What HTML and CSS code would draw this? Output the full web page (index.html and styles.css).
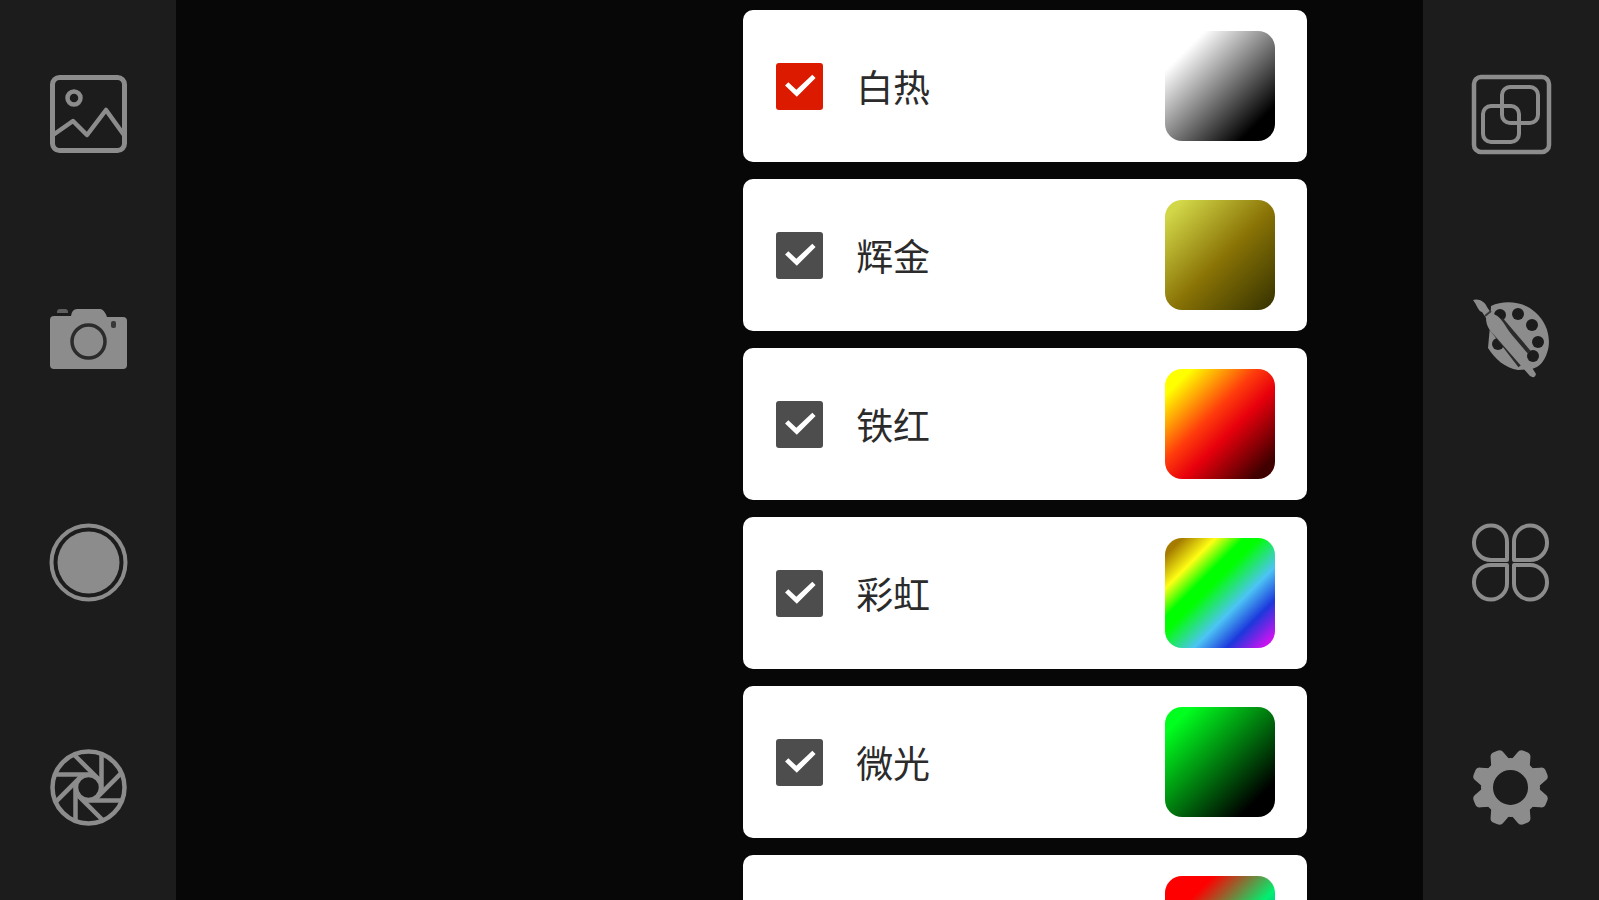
FILE: index.html
```html
<!DOCTYPE html>
<html lang="zh-CN">
  <head>
    <meta charset="UTF-8">
    <title>热成像</title>
    <link rel="stylesheet" href="styles.css">
  </head>
  <body>
    <div class="app">
      <nav class="sidebar">
        <button type="button" class="tool" aria-label="相册">
          <svg class="icon" viewBox="0 0 80 80" fill="none" stroke="currentColor" stroke-width="5" stroke-linejoin="round">
            <rect x="4.500" y="4.500" width="72" height="73" rx="7"/>
            <circle cx="26" cy="25" r="6.500" stroke-width="4.500"/>
            <path d="M5 62 25 48 39 62 58 37 76 62" stroke-width="4.500"/>
          </svg>
        </button>
        <button type="button" class="tool" aria-label="拍照">
          <svg class="icon" viewBox="0 0 80 80" fill="currentColor">
            <path d="M9 14q0-3 3-3h5q3 0 3 3v1H9z" opacity=".6"/>
            <path d="M6 18h17q1-7 6-7h23q4 0 7 8h16q4 0 4 4v44q0 4-4 4H6q-4 0-4-4V22q0-4 4-4z"/>
            <circle cx="40.500" cy="43.500" r="16.500" fill="none" stroke="#2b2b2b" stroke-width="3.500"/>
            <rect x="63" y="23" width="5" height="7" rx="2" fill="#383838"/>
          </svg>
        </button>
        <button type="button" class="tool" aria-label="录像">
          <svg class="icon" viewBox="0 0 80 80">
            <circle cx="40.500" cy="39.500" r="37" fill="none" stroke="currentColor" stroke-width="4"/>
            <circle cx="40.500" cy="39.500" r="31" fill="currentColor"/>
          </svg>
        </button>
        <button type="button" class="tool" aria-label="光圈">
          <svg class="icon" viewBox="0 0 80 80" fill="none" stroke="currentColor" stroke-width="4.500">
            <g transform="translate(40.500 39.500)">
              <circle r="36"/>
              <circle r="12.500"/>
              <path id="blade" d="M13-34V3"/>
              <use href="#blade" transform="rotate(45)"/>
              <use href="#blade" transform="rotate(90)"/>
              <use href="#blade" transform="rotate(135)"/>
              <use href="#blade" transform="rotate(180)"/>
              <use href="#blade" transform="rotate(225)"/>
              <use href="#blade" transform="rotate(270)"/>
              <use href="#blade" transform="rotate(315)"/>
            </g>
          </svg>
        </button>
      </nav>

      <main class="stage">
        <div class="palettes">
          <label class="card">
            <input type="checkbox" class="check active" checked>
            <span class="name">白热</span>
            <span class="swatch white-hot"></span>
          </label>
          <label class="card">
            <input type="checkbox" class="check" checked>
            <span class="name">辉金</span>
            <span class="swatch gold"></span>
          </label>
          <label class="card">
            <input type="checkbox" class="check" checked>
            <span class="name">铁红</span>
            <span class="swatch iron-red"></span>
          </label>
          <label class="card">
            <input type="checkbox" class="check" checked>
            <span class="name">彩虹</span>
            <span class="swatch rainbow"></span>
          </label>
          <label class="card">
            <input type="checkbox" class="check" checked>
            <span class="name">微光</span>
            <span class="swatch low-light"></span>
          </label>
          <label class="card">
            <input type="checkbox" class="check" aria-label="色板" checked>
            <span class="name"></span>
            <span class="swatch red-green"></span>
          </label>
        </div>
      </main>

      <nav class="sidebar">
        <button type="button" class="tool" aria-label="融合">
          <svg class="icon" viewBox="0 0 80 80" fill="none" stroke="currentColor" stroke-width="4.500">
            <rect x="3" y="4" width="75" height="75" rx="7"/>
            <rect x="31" y="14" width="36" height="36" rx="8" stroke-width="4"/>
            <rect x="12" y="33" width="36" height="36" rx="8" stroke-width="4"/>
          </svg>
        </button>
        <button type="button" class="tool" aria-label="调色板">
          <svg class="icon" viewBox="0 0 80 80" fill="currentColor">
            <path d="M20 8C33 2 52 3 64 14C76 24 81 41 76 55C73 64 68 69 61 71L47 72C34 70 24 61 17 50L19 28z"/>
            <g fill="#1c1c1c">
              <circle cx="29" cy="17" r="6"/>
              <circle cx="47" cy="16" r="6"/>
              <circle cx="61" cy="27" r="6"/>
              <circle cx="67" cy="44" r="6"/>
              <circle cx="62" cy="58" r="6"/>
              <circle cx="27" cy="46" r="6"/>
            </g>
            <path d="M30 21 58 54M19 29 49 68" fill="none" stroke="#2b2b2b" stroke-width="4"/>
            <path d="M2 2C8 0 14 4 16 9L20 15C27 17 30 21 34 27L65 76Q64 81 59 78L24 38C18 32 15 27 15 20L11 14C7 13 6 7 2 2z"/>
            <path d="M14 18 20 13" stroke="#3a3a3a" stroke-width="2"/>
          </svg>
        </button>
        <button type="button" class="tool" aria-label="更多">
          <svg class="icon" viewBox="0 0 80 80" fill="none" stroke="currentColor" stroke-width="4" stroke-linejoin="round">
            <path id="petal" d="M36 37H20A17 17 0 0 1 3 20V19A17 17 0 0 1 20 2.500A16 16 0 0 1 36 19z"/>
            <use href="#petal" transform="matrix(-1 0 0 1 79 0)"/>
            <use href="#petal" transform="matrix(1 0 0 -1 0 79)"/>
            <use href="#petal" transform="matrix(-1 0 0 -1 79 79)"/>
          </svg>
        </button>
        <button type="button" class="tool" aria-label="设置">
          <svg class="icon" viewBox="0 0 80 80" fill="currentColor">
            <g transform="translate(39.500 39.500)">
              <circle r="23.500" fill="none" stroke="currentColor" stroke-width="12"/>
              <g transform="rotate(22.500)">
                <path id="tooth" d="M-10-26-7-35Q-6-39-2-39H2Q6-39 7-35L10-26z"/>
                <use href="#tooth" transform="rotate(45)"/>
                <use href="#tooth" transform="rotate(90)"/>
                <use href="#tooth" transform="rotate(135)"/>
                <use href="#tooth" transform="rotate(180)"/>
                <use href="#tooth" transform="rotate(225)"/>
                <use href="#tooth" transform="rotate(270)"/>
                <use href="#tooth" transform="rotate(315)"/>
              </g>
            </g>
          </svg>
        </button>
      </nav>
    </div>
  </body>
</html>
```

FILE: styles.css
```css
* {
  box-sizing: border-box;
}

body {
  background-color: #070707;
  font-family: "Noto Sans CJK SC", sans-serif;
  margin: 0;
}

.app {
  display: grid;
  grid-template-columns: 11% 1fr 11%;
  height: 100vh;
  overflow: hidden;
}

.sidebar {
  background-color: #1c1c1c;
  display: flex;
  flex-direction: column;
  justify-content: space-around;
  align-items: center;
}

.tool {
  background: none;
  border: none;
  color: #8c8c8c;
  cursor: pointer;
  padding: 0;
}

.icon {
  display: block;
  overflow: visible;
  width: 80px;
  height: 80px;
}

.stage {
  display: flex;
  justify-content: flex-end;
  min-height: 0;
  overflow: hidden;
  padding: 10px 116px 0 0;
}

.palettes {
  display: flex;
  flex-direction: column;
  gap: 17px;
  width: 100%;
  max-width: 564px;
}

.card {
  background-color: #fff;
  border-radius: 10px;
  display: flex;
  flex-shrink: 0;
  align-items: center;
  cursor: pointer;
  padding: 21px 32px 21px 33px;
}

.check {
  appearance: none;
  background-color: #4d4d4d;
  border-radius: 3px;
  width: 47px;
  height: 47px;
  margin: 0 33px 0 0;
}

.check.active {
  background-color: #dc1a00;
}

.check:checked::before {
  content: "";
  display: block;
  height: 100%;
  background-color: #fff;
  clip-path: polygon(19% 49%, 26% 42%, 43% 58%, 77% 26%, 84% 33%, 44% 73%);
}

.name {
  color: #2b2b2b;
  flex: 1;
  font-size: 37px;
  line-height: 48px;
}

.swatch {
  border-radius: 17px;
  width: 110px;
  height: 110px;
}

.white-hot {
  background: linear-gradient(135deg, #fff 18%, #000 84%);
}

.gold {
  background: linear-gradient(135deg, #d2d748 8%, #8a7406 52%, #3a3600 96%);
}

.iron-red {
  background: linear-gradient(135deg, #ff0 12%, #ff3c0c 42%, #e8000c 58%, #400000 90%);
}

.rainbow {
  background: linear-gradient(135deg, #a67c00 8%, #ffff14 23%, #0f0 36%, #0f0 43%, #4cc4f4 63%, #1c38dc 78%, #c814f0 94%);
}

.low-light {
  background: linear-gradient(135deg, #00ff1e 12%, #000 84%);
}

.red-green {
  background: linear-gradient(135deg, #f00 22%, #00f070 56%, #1c38dc 90%);
}
```
